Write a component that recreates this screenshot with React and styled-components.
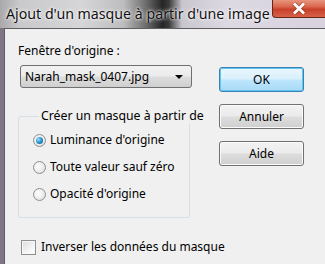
import React from 'react';
import styled, { createGlobalStyle } from 'styled-components';

const GlobalStyle = createGlobalStyle`
  html, body {
    margin: 0;
    padding: 0;
    overflow: hidden;
    background: #f0f0f0;
  }
`;

const Dialog = styled.div`
  width: 325px;
  height: 264px;
  display: flex;
  flex-direction: column;
  font-family: 'Noto Sans', 'Open Sans', sans-serif;
`;

const Caption = styled.div`
  width: 325px;
  height: 28px;
  flex: none;
  display: flex;
  align-items: flex-start;
  background: linear-gradient(90deg, #a9a9ab 0%, #c9c9cb 6%, #d6d6d8 25%, #bdbdbf 38%, #6b6b6b 45%, #262626 50%, #3a3a3a 52%, #c9c6ce 56%, #ddd9e3 70%, #d7d2de 100%);
`;

const CaptionText = styled.span`
  width: 266px;
  flex: none;
  padding: 4px 0 0 6px;
  font-size: 14.2px;
  line-height: 19px;
  color: #111;
  text-shadow: 0 0 4px #ffffff, 0 0 2px #ffffff;
  white-space: nowrap;
  overflow: hidden;
`;

const CloseBox = styled.span`
  width: 53px;
  height: 18px;
  flex: none;
  box-sizing: border-box;
  display: flex;
  align-items: center;
  justify-content: center;
  border-left: 1px solid #6b2418;
  border-bottom: 1px solid #6b2418;
  border-bottom-left-radius: 4px;
  background: linear-gradient(180deg, #e8957f 0%, #d9654b 40%, #c7402a 55%, #d8614a 100%);
`;

const Frame = styled.div`
  flex: 1;
  display: flex;
  background: #7f7585;
  padding-left: 4px;
`;

const Content = styled.div`
  flex: 1;
  background: #f0f0f0;
  border-top: 1px solid #5d5d60;
  border-left: 1px solid #5d5d60;
  display: flex;
  padding: 14px 0 0 13px;
`;

const LeftColumn = styled.div`
  width: 180px;
  display: flex;
  flex-direction: column;
`;

const RightColumn = styled.div`
  margin-left: 21px;
  padding-top: 24px;
  display: flex;
  flex-direction: column;
  gap: 12px;
`;

const Label = styled.div`
  font-size: 12px;
  line-height: 16px;
  color: #000;
  white-space: nowrap;
`;

const Select = styled.div`
  margin: 6px 0 0 2px;
  width: 172px;
  height: 23px;
  box-sizing: border-box;
  border: 1px solid #707070;
  border-radius: 3px;
  background: linear-gradient(180deg, #f2f2f2 0%, #ebebeb 48%, #dddddd 52%, #cfcfcf 100%);
  display: flex;
  align-items: center;
  justify-content: space-between;
  padding: 0 8px 0 4px;
  font-size: 12px;
  color: #000;
`;

const Arrow = styled.span`
  width: 0;
  height: 0;
  border-left: 4px solid transparent;
  border-right: 4px solid transparent;
  border-top: 4px solid #000;
`;

const GroupBox = styled.fieldset`
  margin: 20px 0 0 0;
  width: 172px;
  height: 110px;
  box-sizing: border-box;
  border: 1px solid #d5dfe5;
  border-radius: 3px;
  padding: 8px 0 0 14px;
  display: flex;
  flex-direction: column;
  gap: 11px;
  min-width: 0;
`;

const Legend = styled.legend`
  font-size: 12.3px;
  line-height: 16px;
  padding: 0 2px;
  margin-left: 6px;
  white-space: nowrap;
  color: #000;
`;

const Option = styled.div`
  display: flex;
  align-items: center;
  gap: 4px;
  font-size: 12px;
  line-height: 16px;
  color: #000;
  white-space: nowrap;
`;

const Radio = styled.span`
  width: 13px;
  height: 13px;
  flex: none;
  box-sizing: border-box;
  border-radius: 50%;
  border: 1px solid #8f8f8f;
  background: radial-gradient(circle at 40% 40%, #ffffff 0%, #e9e9e9 60%, #d2d2d2 100%);
  display: flex;
  align-items: center;
  justify-content: center;

  &::after {
    content: '';
    display: ${(p) => (p.$checked ? 'block' : 'none')};
    width: 7px;
    height: 7px;
    border-radius: 50%;
    background: radial-gradient(circle at 35% 35%, #a6e0f8 0%, #2b9ad3 45%, #0e4d86 100%);
  }
`;

const CheckRow = styled.div`
  margin: 21px 0 0 3px;
  display: flex;
  align-items: center;
  gap: 5px;
  font-size: 12px;
  line-height: 16px;
  color: #000;
  white-space: nowrap;
`;

const Checkbox = styled.span`
  width: 15px;
  height: 15px;
  flex: none;
  box-sizing: border-box;
  border: 1px solid #8f8f8f;
  background: linear-gradient(135deg, #dcdcdc 0%, #f4f4f4 60%, #ffffff 100%);
  box-shadow: inset 0 0 0 1px #f8f8f8;
`;

const Button = styled.div`
  width: 85px;
  height: 25px;
  box-sizing: border-box;
  border-radius: 3px;
  border: 1px solid ${(p) => (p.$primary ? '#3c7fb1' : '#707070')};
  background: ${(p) =>
    p.$primary
      ? 'linear-gradient(180deg, #eaf6fd 0%, #d9f0fc 48%, #bee6fd 52%, #a7d9f5 100%)'
      : 'linear-gradient(180deg, #f2f2f2 0%, #ebebeb 48%, #dddddd 52%, #cfcfcf 100%)'};
  box-shadow: ${(p) => (p.$primary ? 'inset 0 0 0 1px #5ec8f3' : 'inset 0 0 0 1px #fbfbfb')};
  display: flex;
  align-items: center;
  justify-content: center;
  font-size: 12px;
  color: #000;
`;

function CloseGlyph() {
  return (
    <svg width="16" height="13" viewBox="0 0 16 13">
      <path d="M3 1.5 L13 11.5 M13 1.5 L3 11.5" stroke="#7a2a1c" strokeWidth="4.4" opacity="0.5" />
      <path d="M3 1.5 L13 11.5 M13 1.5 L3 11.5" stroke="#ffffff" strokeWidth="2.8" />
    </svg>
  );
}

export default function App() {
  return (
    <>
      <GlobalStyle />
      <Dialog>
        <Caption>
          <CaptionText>Ajout d'un masque à partir d'une image</CaptionText>
          <CloseBox>
            <CloseGlyph />
          </CloseBox>
        </Caption>
        <Frame>
          <Content>
            <LeftColumn>
              <Label>Fenêtre d'origine :</Label>
              <Select>
                <span>Narah_mask_0407.jpg</span>
                <Arrow />
              </Select>
              <GroupBox>
                <Legend>Créer un masque à partir de</Legend>
                <Option>
                  <Radio $checked />
                  Luminance d'origine
                </Option>
                <Option>
                  <Radio />
                  Toute valeur sauf zéro
                </Option>
                <Option>
                  <Radio />
                  Opacité d'origine
                </Option>
              </GroupBox>
              <CheckRow>
                <Checkbox />
                Inverser les données du masque
              </CheckRow>
            </LeftColumn>
            <RightColumn>
              <Button $primary>OK</Button>
              <Button>Annuler</Button>
              <Button>Aide</Button>
            </RightColumn>
          </Content>
        </Frame>
      </Dialog>
    </>
  );
}
